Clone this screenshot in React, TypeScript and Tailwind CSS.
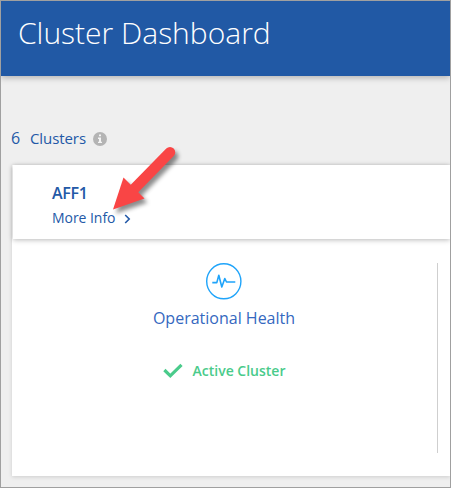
function InfoIcon() {
  return (
    <svg width="14" height="14" viewBox="0 0 14 14" className="ml-[7px] mt-px shrink-0">
      <circle cx="7" cy="7" r="7" fill="#b4b4b4" />
      <path d="M6 2.5h2v1.8H6zM5 5.6h3v4.2h1v1.3H5V9.8h1V6.9H5z" fill="#f4f4f4" />
    </svg>
  );
}

function PulseIcon() {
  return (
    <svg width="36" height="37" viewBox="0 0 36 37" fill="none" stroke="#1fa4fa" className="shrink-0">
      <ellipse cx="17.8" cy="18.3" rx="17.1" ry="17.5" strokeWidth="1.4" />
      <path d="M6.3 19.6H10.8L12.8 12.3L15.8 24L18.8 15.5L20.5 19H29.3" strokeWidth="1.6" strokeLinejoin="round" />
    </svg>
  );
}

function Arrow() {
  return (
    <svg
      width="85"
      height="80"
      viewBox="0 0 85 80"
      className="absolute left-[102px] top-[139px] drop-shadow-[3px_4px_2px_rgba(0,0,0,0.45)]"
    >
      <path d="M67 12.3L31 49" stroke="#f94545" strokeWidth="10.5" strokeLinecap="round" />
      <path d="M10 69.5L20.5 37.5L41.5 58.5Z" fill="#f94545" />
    </svg>
  );
}

export default function App() {
  return (
    <div className="relative flex h-[488px] w-[451px] flex-col overflow-hidden border border-[#a0a0a0] bg-[#efefef] font-['Open_Sans','Noto_Sans',sans-serif] text-[#2359a7]">
      <header className="z-10 flex h-[75px] shrink-0 items-start bg-[#2159a5] pl-[17px] pt-[11px] shadow-[0_2px_6px_rgba(0,0,0,0.25)]">
        <h1 className="whitespace-nowrap text-[30px] font-light leading-[42px] text-white">Cluster Dashboard</h1>
      </header>

      <div className="mt-[52px] flex h-[20px] shrink-0 items-center pl-[10px] text-[15px] leading-5">
        <span className="w-[9px] text-[16px]">6</span>
        <span className="ml-[10px] w-[56px] tracking-[-0.08px]">Clusters</span>
        <InfoIcon />
      </div>

      <main className="ml-[11px] mt-[17px] flex h-[311px] shrink-0 flex-col bg-white shadow-[0_1px_4px_rgba(0,0,0,0.14)]">
        <section className="ml-px flex h-[74px] shrink-0 flex-col bg-white pl-[39px] pt-[17px] shadow-[0_1px_5px_rgba(0,0,0,0.28)]">
          <h2 className="text-[16px] font-semibold leading-[22px] tracking-[-0.3px]">AFF1</h2>
          <a className="mt-[4px] flex items-center text-[14px] leading-5 tracking-[-0.05px]">
            More Info
            <svg width="7" height="10" viewBox="0 0 7 10" fill="none" className="ml-[9px] mt-[2px]">
              <path d="M1.2 1L5.2 5L1.2 9" stroke="#2359a7" strokeWidth="1.6" />
            </svg>
          </a>
        </section>
        <section className="flex grow items-start pt-[24px]">
          <div className="flex w-[424px] flex-col items-center">
            <PulseIcon />
            <h3 className="mt-[6px] text-[16px] leading-6 text-[#3568c0]">Operational Health</h3>
            <div className="mt-[31px] flex items-center text-[14px] font-semibold leading-5 text-[#4acb8b]">
              <svg width="20" height="16" viewBox="0 0 20 16" fill="none" className="mr-[10px]">
                <path d="M1.4 7L7.3 12.8L18.5 1.8" stroke="#4acb8b" strokeWidth="3.2" />
              </svg>
              Active Cluster
            </div>
          </div>
          <div className="ml-px h-[190px] w-px bg-[#cfcfcf]" />
        </section>
      </main>
      <Arrow />
    </div>
  );
}
